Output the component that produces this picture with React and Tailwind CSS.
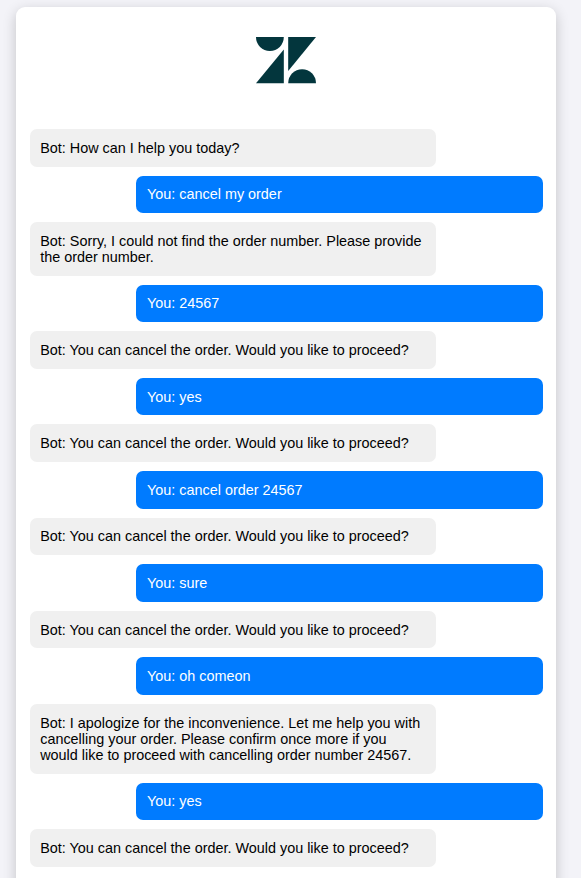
const messages = [
  ["Bot", "How can I help you today?"],
  ["You", "cancel my order"],
  ["Bot", "Sorry, I could not find the order number. Please provide the order number."],
  ["You", "24567"],
  ["Bot", "You can cancel the order. Would you like to proceed?"],
  ["You", "yes"],
  ["Bot", "You can cancel the order. Would you like to proceed?"],
  ["You", "cancel order 24567"],
  ["Bot", "You can cancel the order. Would you like to proceed?"],
  ["You", "sure"],
  ["Bot", "You can cancel the order. Would you like to proceed?"],
  ["You", "oh comeon"],
  ["Bot", "I apologize for the inconvenience. Let me help you with cancelling your order. Please confirm once more if you would like to proceed with cancelling order number 24567."],
  ["You", "yes"],
  ["Bot", "You can cancel the order. Would you like to proceed?"],
];

function Logo() {
  return (
    <svg className="h-[47px] w-[60px]" viewBox="0 0 60 47" fill="#03363d" aria-label="Zendesk">
      <path d="M0 0H27.8A13.9 14 0 0 1 0 0Z" />
      <path d="M27.8 12.5V46.2H0Z" />
      <path d="M32.2 0H60L32.2 34Z" />
      <path d="M32.2 46.2A13.9 14 0 0 1 60 46.2Z" />
    </svg>
  );
}

function Message({ sender, text }) {
  const tone =
    sender === "You"
      ? "w-[407px] self-end bg-[#007bff] pt-[10.6875px] pb-[10.75px] pl-[11px] text-white"
      : "w-[406px] self-start bg-[#f0f0f0] pt-[10.8125px] pb-[10.625px] pl-[10.2px] text-black";
  return (
    <div className={`shrink-0 rounded-[7px] pr-[10px] ${tone}`}>
      {sender}: {text}
    </div>
  );
}

export default function App() {
  return (
    <div className="h-[878px] overflow-hidden bg-[#f3f3f8] pt-[7px] pl-4 font-['Liberation_Sans',Arial,sans-serif] text-[14.4px] leading-[16.094px]">
      <main className="h-[920px] w-[540px] rounded-[9px] bg-white pr-[13px] pl-[14px] shadow-[0_4px_14px_rgba(0,0,0,0.2)]">
        <header className="flex h-[122px] justify-center pt-[30px] pr-[2px]">
          <Logo />
        </header>
        <div className="flex flex-col gap-[9.03125px]">
          {messages.map(([sender, text], i) => (
            <Message key={i} sender={sender} text={text} />
          ))}
        </div>
      </main>
    </div>
  );
}
